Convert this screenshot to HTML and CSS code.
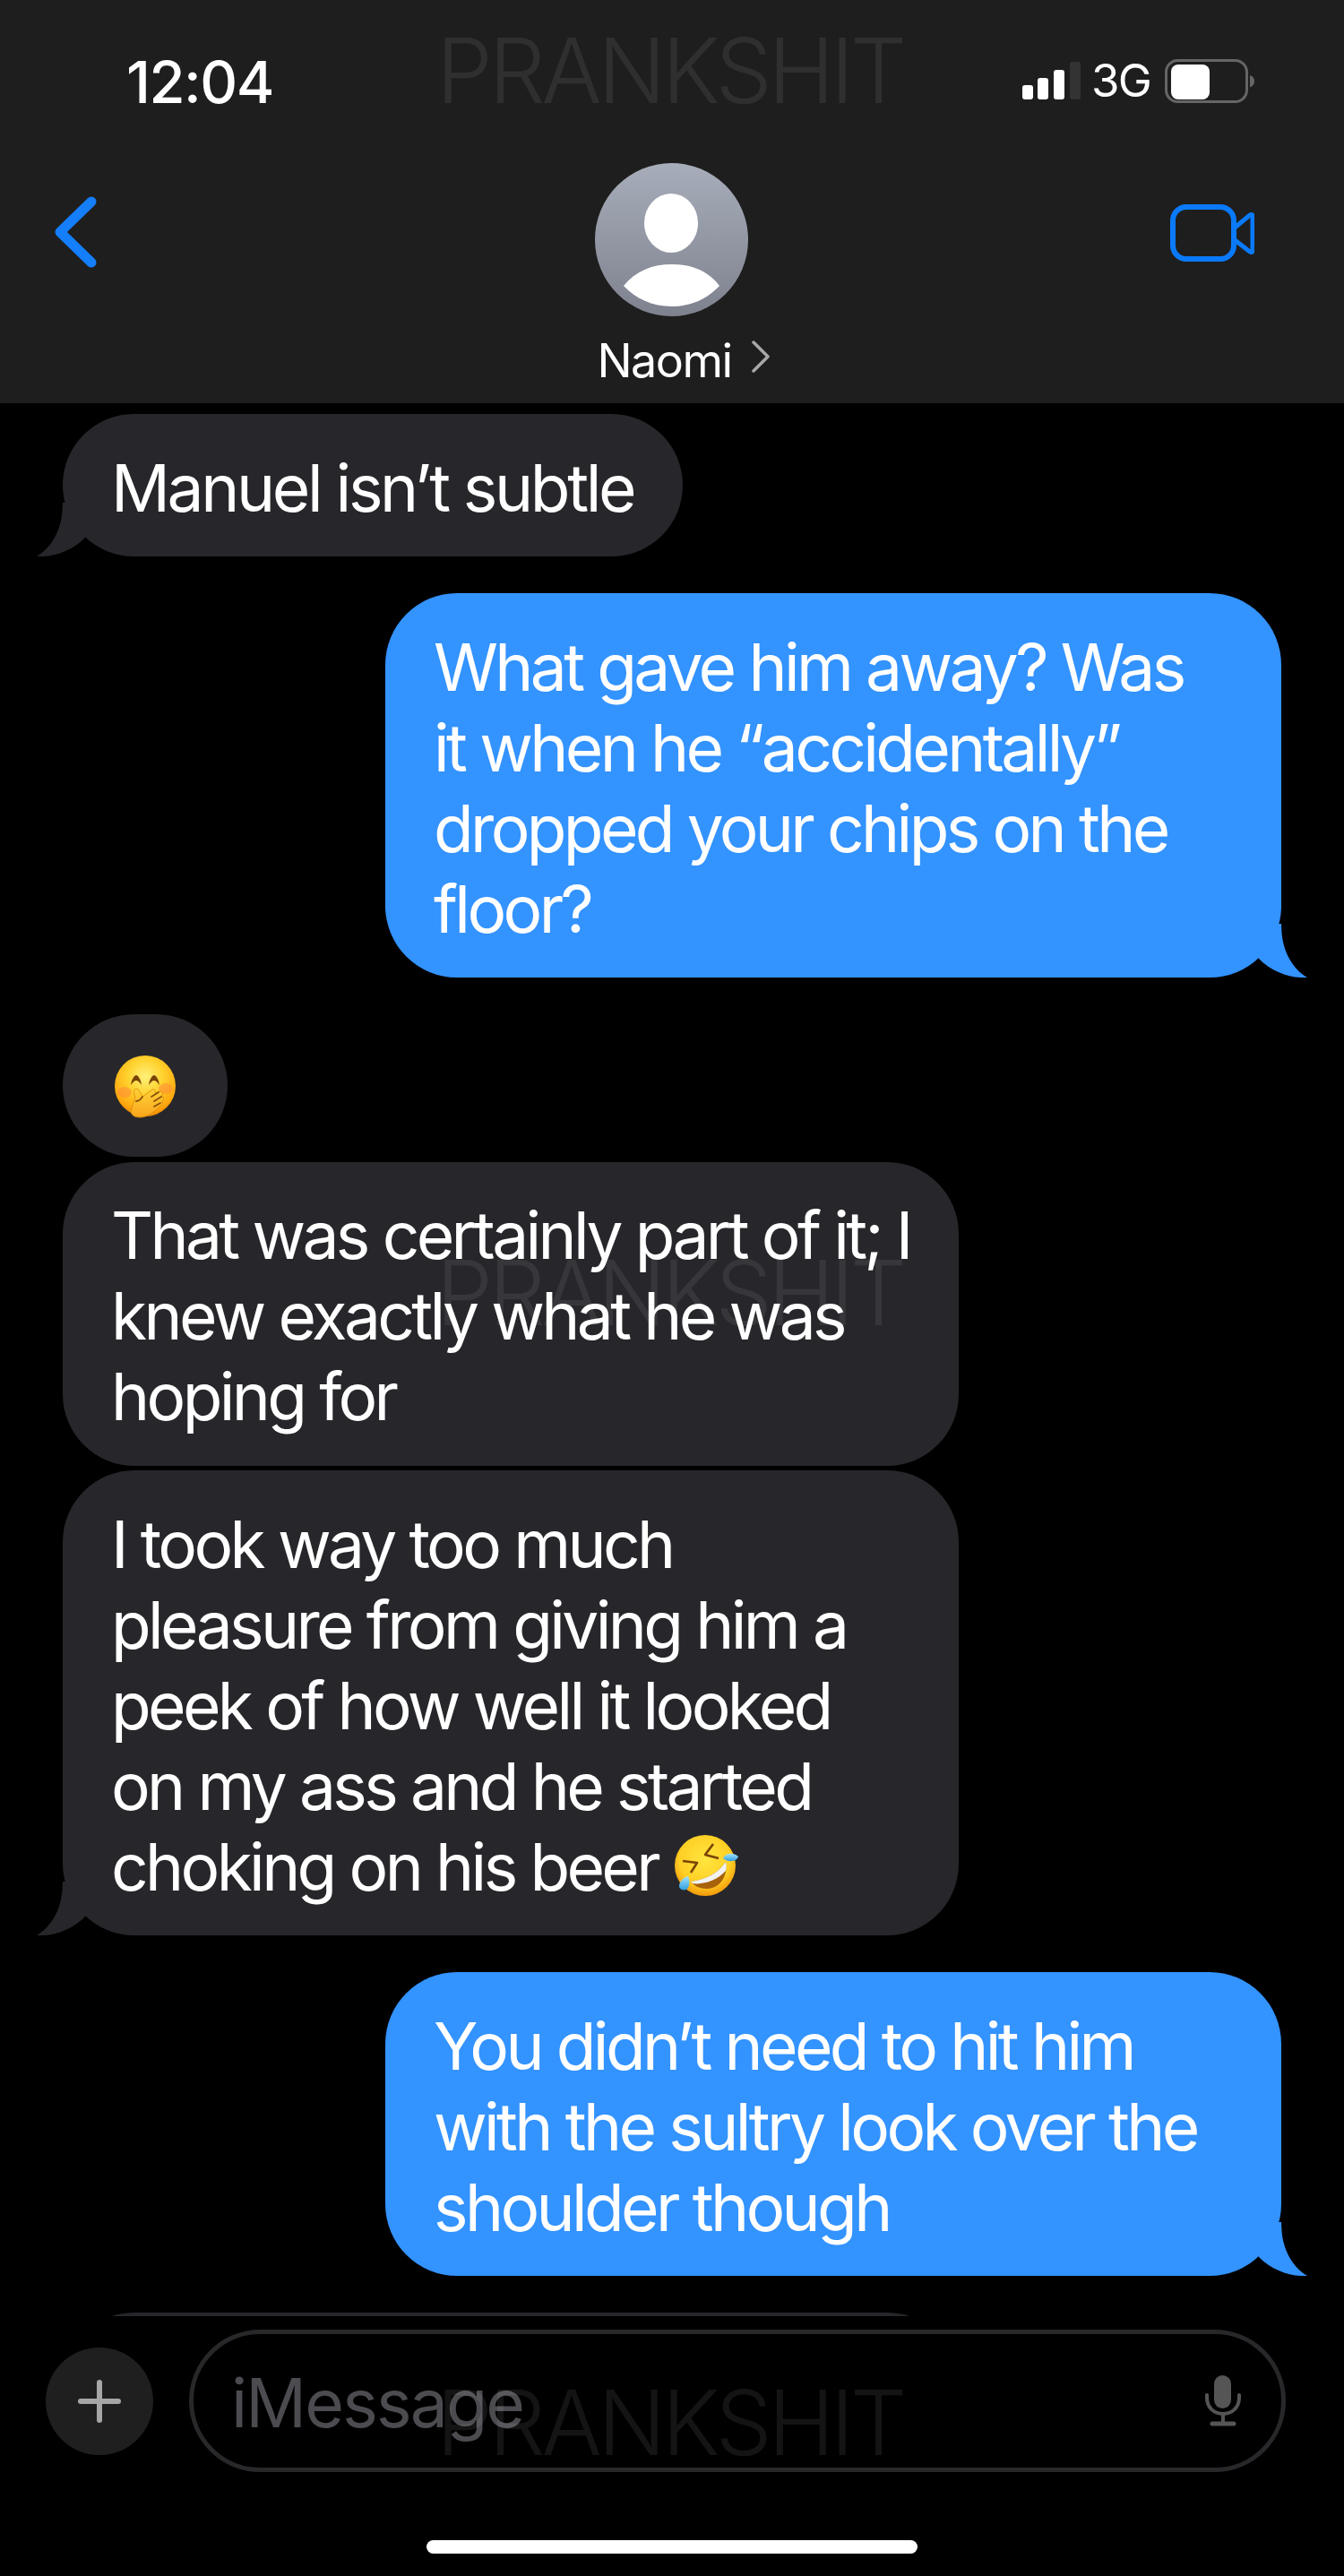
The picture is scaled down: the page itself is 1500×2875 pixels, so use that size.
FILE: index.html
```html
<!DOCTYPE html>
<html lang="en">
<head>
<meta charset="utf-8">
<title>Naomi</title>
<link rel="stylesheet" href="styles.css">
</head>
<body>
<div class="phone">
  <header class="top">
    <div class="status">
      <span class="time">12:04</span>
      <div class="indicators">
        <svg class="signal" viewBox="0 0 65 42" aria-hidden="true">
          <rect x="0" y="26" width="12" height="16" rx="3" fill="#fff"/>
          <rect x="17" y="18" width="12" height="24" rx="3" fill="#fff"/>
          <rect x="35" y="9" width="12" height="33" rx="3" fill="#fff"/>
          <rect x="53" y="0" width="12" height="42" rx="3" fill="#333"/>
        </svg>
        <span class="network">3G</span>
        <svg class="battery" viewBox="0 0 100 49" aria-hidden="true">
          <rect x="1.5" y="1.5" width="90" height="46" rx="13" fill="none" stroke="#666" stroke-width="3"/>
          <rect x="7" y="6" width="43" height="39" rx="8" fill="#fff"/>
          <path d="M95 18c3 1 5 3 5 6.500s-2 6-5 7z" fill="#666"/>
        </svg>
      </div>
    </div>
    <nav class="nav">
      <svg class="back" viewBox="0 0 60 90" aria-hidden="true">
        <path d="M47 11 12 45l35 34" fill="none" stroke="#147efb" stroke-width="11" stroke-linecap="round" stroke-linejoin="round"/>
      </svg>
      <div class="contact">
        <svg class="avatar" viewBox="0 0 171 171" aria-hidden="true">
          <defs>
            <linearGradient id="avatarFill" x1="0" y1="0" x2="0" y2="1">
              <stop offset="0" stop-color="#a7adba"/>
              <stop offset="1" stop-color="#7e828e"/>
            </linearGradient>
          </defs>
          <circle cx="85.500" cy="85.500" r="85.500" fill="url(#avatarFill)"/>
          <ellipse cx="85" cy="67" rx="30" ry="33" fill="#fff"/>
          <path d="M32 137C46 120 64 113 86 113s40 7 53 24c-13 14-31 23-53 23s-41-9-54-23z" fill="#fff"/>
        </svg>
        <div class="name-row">
          <span class="name">Naomi</span>
          <svg class="chevron" viewBox="0 0 22 36" aria-hidden="true">
            <path d="M3 2 19 18 3 34" fill="none" stroke="#a8a8a8" stroke-width="3.500" stroke-linecap="round" stroke-linejoin="round"/>
          </svg>
        </div>
      </div>
      <svg class="video" viewBox="0 0 97 67" aria-hidden="true">
        <rect x="6" y="6" width="68" height="58" rx="15" fill="none" stroke="#0a7afa" stroke-width="6"/>
        <path d="M74 30 92 15c1.500-1 3-.5 3 1.500v38c0 2-1.500 2.500-3 1.500L74 42" fill="none" stroke="#0a7afa" stroke-width="5" stroke-linejoin="round"/>
      </svg>
    </nav>
  </header>

  <main class="messages">
    <div class="bubble in short">Manuel isn’t subtle<svg class="tail" viewBox="0 0 80 60" aria-hidden="true"><path d="M30 0 29.500 10C28 30 18 50 1 60 20 61 40 54 55 39L70 0z"/></svg></div>
    <div class="bubble out wide gap">What gave him away? Was<br>it when he “accidentally”<br>dropped your chips on the<br>floor?<svg class="tail" viewBox="0 0 80 60" aria-hidden="true"><path d="M30 0 29.500 10C28 30 18 50 1 60 20 61 40 54 55 39L70 0z"/></svg></div>
    <div class="bubble in emoji-only gap">
      <svg class="emoji-hand" viewBox="0 0 68 70" aria-hidden="true">
        <defs>
          <radialGradient id="faceA" cx=".5" cy=".35" r=".65">
            <stop offset="0" stop-color="#fff07a"/>
            <stop offset=".45" stop-color="#ffd22e"/>
            <stop offset=".85" stop-color="#ffa90f"/>
            <stop offset="1" stop-color="#ea8a05"/>
          </radialGradient>
          <linearGradient id="handA" x1="0" y1="0" x2="0" y2="1">
            <stop offset="0" stop-color="#ffd23a"/>
            <stop offset="1" stop-color="#f9a51a"/>
          </linearGradient>
        </defs>
        <circle cx="34" cy="34" r="34" fill="url(#faceA)"/>
        <ellipse cx="11" cy="41" rx="8" ry="6" fill="#ff8a3a" opacity=".55"/>
        <ellipse cx="57" cy="37" rx="8" ry="6" fill="#ff8a3a" opacity=".55"/>
        <path d="M18 33c1-7 4-11 6-11s5 4 6 11c-2-3-4-5-6-5s-4 2-6 5z" fill="#7a4306"/>
        <path d="M38 33c1-7 4-11 6-11s5 4 6 11c-2-3-4-5-6-5s-4 2-6 5z" fill="#7a4306"/>
        <path d="M18 62c1-6 4-11 5-16-3-5-1-10 2-9 3 2 4 6 6 9l11-8c3-1 4 2 3 4l5-2c4 0 4 4 2 5 3 1 3 4 1 6 1 3 0 5-3 6-5 6-15 13-23 12-5 0-9-3-9-7z" fill="url(#handA)" stroke="#d98508" stroke-width=".8"/>
        <path d="M31 46c-2 3-5 5-7 5M41 46l8-5M44 51l8-5M44 57l7-4" fill="none" stroke="#8a5208" stroke-width="1.800" stroke-linecap="round"/>
      </svg>
    </div>
    <div class="bubble in wide tight">That was certainly part of it; I<br>knew exactly what he was<br>hoping for</div>
    <div class="bubble in wide tight">I took way too much<br>pleasure from giving him a<br>peek of how well it looked<br>on my ass and he started<br>choking on his beer <svg class="emoji-laugh" viewBox="0 0 72 68" aria-hidden="true">
        <defs>
          <radialGradient id="faceB" cx=".5" cy=".4" r=".6">
            <stop offset="0" stop-color="#ffe640"/>
            <stop offset=".7" stop-color="#ffcf24"/>
            <stop offset="1" stop-color="#f39a0b"/>
          </radialGradient>
          <linearGradient id="tear" x1="0" y1="0" x2="0" y2="1">
            <stop offset="0" stop-color="#a6e4fb"/>
            <stop offset="1" stop-color="#2c9fe0"/>
          </linearGradient>
        </defs>
        <circle cx="34" cy="34" r="34" fill="url(#faceB)"/>
        <path d="M43 10 34 22 49 26" fill="none" stroke="#7a4306" stroke-width="2.600" stroke-linejoin="round"/>
        <path d="M9 29 25 31 18 42" fill="none" stroke="#7a4306" stroke-width="2.600" stroke-linejoin="round"/>
        <path d="M18 52C34 50 48 43 57 30 60 46 50 60 36 60 28 60 22 57 18 52z" fill="#a8620a"/>
        <path d="M18 52C34 50 48 43 57 30 58 34 58 37 57 40 48 50 32 56 20 54z" fill="#f2f2f2"/>
        <path d="M54 26c3-6 11-7 17-2-2 6-11 7-17 2z" fill="url(#tear)"/>
        <path d="M15 46c2 4 2 11-1 14-3 3-9 1-9-3 0-5 5-10 10-11z" fill="url(#tear)"/>
      </svg><svg class="tail" viewBox="0 0 80 60" aria-hidden="true"><path d="M30 0 29.500 10C28 30 18 50 1 60 20 61 40 54 55 39L70 0z"/></svg></div>
    <div class="bubble out wide gap">You didn’t need to hit him<br>with the sultry look over the<br>shoulder though<svg class="tail" viewBox="0 0 80 60" aria-hidden="true"><path d="M30 0 29.500 10C28 30 18 50 1 60 20 61 40 54 55 39L70 0z"/></svg></div>
    <div class="bubble in wide gap hidden-next"></div>
  </main>

  <footer class="composer">
    <div class="input-row">
      <div class="plus">
        <svg viewBox="0 0 48 48" aria-hidden="true">
          <path d="M24 3v42" stroke="#a6a6a6" stroke-width="6" stroke-linecap="round"/>
          <path d="M3 24h42" stroke="#a6a6a6" stroke-width="6" stroke-linecap="round"/>
        </svg>
      </div>
      <div class="field">
        <span class="placeholder">iMessage</span>
        <svg class="mic" viewBox="0 0 40 58" aria-hidden="true">
          <rect x="10" y="0" width="19" height="37" rx="9.500" fill="#555"/>
          <path d="M2 22v3c0 11 8 18 18 18s18-7 18-18v-3" fill="none" stroke="#555" stroke-width="4" stroke-linecap="round"/>
          <path d="M20 43v10" stroke="#555" stroke-width="4"/>
          <path d="M8 54h24" stroke="#555" stroke-width="5" stroke-linecap="round"/>
        </svg>
      </div>
    </div>
    <div class="home-bar"></div>
  </footer>

  <div class="watermark wm-top">PRANKSHIT</div>
  <div class="watermark wm-mid">PRANKSHIT</div>
  <div class="watermark wm-bottom">PRANKSHIT</div>
</div>
</body>
</html>
```

FILE: styles.css
```css
* { box-sizing: border-box; }
html, body { margin: 0; padding: 0; background: #000; }
body { font-family: Inter, "Liberation Sans", sans-serif; color: #fff; }

.phone { position: relative; width: 1500px; height: 2875px; overflow: hidden; background: #000; display: flex; flex-direction: column; }

/* header */
.top { height: 450px; background: #1e1e1e; flex: none; }
.status { height: 182px; padding: 55px 100px 0 141px; display: flex; justify-content: space-between; align-items: flex-start; }
.time { font-size: 65px; line-height: 74px; font-weight: 500; letter-spacing: -1.500px; }
.indicators { display: flex; align-items: center; height: 70px; }
.signal { width: 65px; height: 42px; }
.network { font-size: 51px; line-height: 60px; margin-left: 12px; letter-spacing: -1.800px; width: 82px; }
.battery { width: 100px; height: 49px; }

.nav { height: 268px; padding: 0 61px; display: grid; grid-template-columns: 1fr auto 1fr; align-items: start; }
.back { width: 60px; height: 90px; margin-top: 32px; margin-left: -6px; }
.video { width: 97px; height: 67px; margin-top: 43px; margin-right: 39px; justify-self: end; }
.contact { display: flex; flex-direction: column; align-items: center; }
.avatar { width: 171px; height: 171px; display: block; }
.name-row { display: flex; align-items: flex-start; margin-top: 20px; margin-left: 26px; }
.name { font-size: 52px; line-height: 60px; letter-spacing: -1.500px; }
.chevron { width: 22px; height: 36px; margin-left: 21px; margin-top: 7px; }

/* conversation */
.messages { height: 2135px; flex: none; padding: 12px 70px 0; display: flex; flex-direction: column; align-items: flex-start; overflow: hidden; }
.bubble { position: relative; flex: none; padding: 37.500px 54px 31.500px; border-radius: 80px; font-size: 73px; line-height: 90px; letter-spacing: -3.650px; white-space: nowrap; }
.in { background: #27272b; fill: #27272b; align-self: flex-start; }
.out { background: #3393ff; fill: #3393ff; align-self: flex-end; }
.wide { width: 1000px; }
.short { width: 692px; letter-spacing: -3.350px; }
.gap { margin-top: 41px; }
.tight { margin-top: 5.500px; }
.hidden-next { height: 340px; }
.tail { position: absolute; bottom: 0; left: -30px; width: 80px; height: 60px; display: block; }
.out .tail { left: auto; right: -30px; transform: scaleX(-1); }
.emoji-only { padding: 46px 58px; height: 159px; }
.emoji-hand { display: block; width: 68px; height: 70px; }
.emoji-laugh { width: 72px; height: 68px; vertical-align: -6px; overflow: visible; margin-left: 2px; }

/* composer */
.composer { flex: 1; background: #000; padding-top: 15px; display: flex; flex-direction: column; align-items: center; }
.input-row { width: 100%; padding: 0 65px 0 51px; display: flex; align-items: center; gap: 40px; }
.plus { width: 120px; height: 120px; flex: none; border-radius: 50%; background: #1f1f20; display: flex; align-items: center; justify-content: center; }
.plus svg { width: 48px; height: 48px; }
.field { flex: 1; height: 159px; border: 5px solid #28282b; border-radius: 80px; padding: 0 45px 0 42px; display: flex; align-items: center; justify-content: space-between; }
.placeholder { font-size: 75px; line-height: 90px; padding-top: 5px; letter-spacing: -1.800px; color: #4b4b50; }
.mic { width: 40px; height: 58px; }
.home-bar { width: 548px; height: 15px; margin-top: 76px; background: #fff; border-radius: 8px; }

/* watermark, laid over the whole screenshot */
.watermark { position: absolute; left: 487px; font-size: 100px; line-height: 100px; font-weight: 300; letter-spacing: -4.400px; color: rgba(255, 255, 255, .08); pointer-events: none; }
.wm-top { top: 29px; }
.wm-mid { top: 1393px; }
.wm-bottom { top: 2654px; }
```
